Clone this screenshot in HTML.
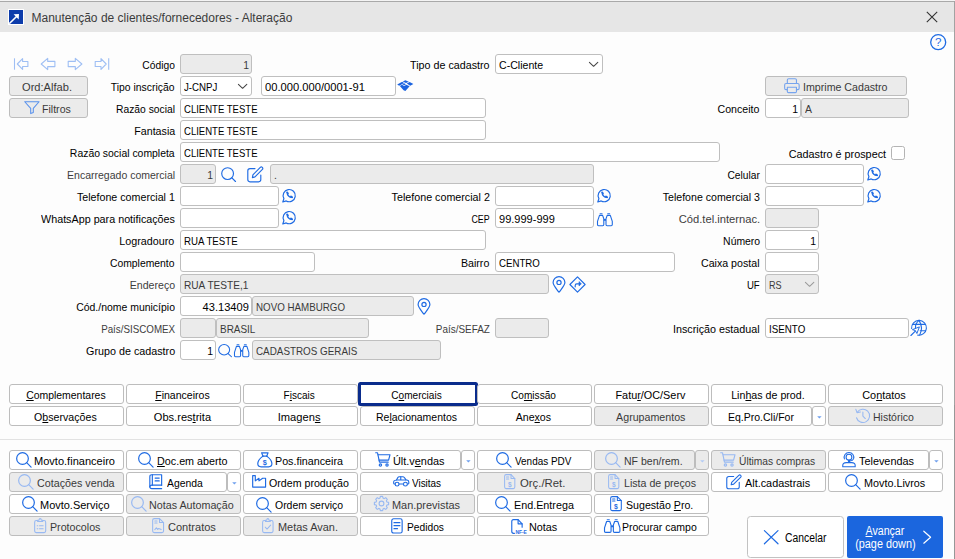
<!DOCTYPE html>
<html lang="pt-BR"><head><meta charset="utf-8"><title>Manutenção de clientes/fornecedores - Alteração</title>
<style>
html,body{margin:0;padding:0;background:#fdfdfd}
body{width:955px;height:559px;position:relative;overflow:hidden;font-family:"Liberation Sans",sans-serif;font-size:11px;color:#000}
#tb{position:absolute;left:0;top:0;width:955px;height:32px;background:#e6e6e6;border-top:1px solid #f4f4f4;box-sizing:border-box}
#tb:before{content:"";position:absolute;left:0;top:0;width:955px;height:1px;background:#a9a9a9}
#tt{position:absolute;left:31.5px;top:10px;font-size:12px;letter-spacing:0;color:#3c3c3c;white-space:nowrap;line-height:16px}
.ic{position:absolute;overflow:visible}
.lb{position:absolute;height:20px;line-height:23px;white-space:nowrap;text-align:right}
.lb.dis{color:#3e3e3e}
.fd{position:absolute;height:20px;box-sizing:border-box;border:1px solid #bfbfbf;border-radius:3px;background:#fff;line-height:21px;padding:0 2px 0 3px;white-space:nowrap;overflow:hidden}
.fd.dis{background:#ebebeb;color:#3a3a3a}
.fd.r{text-align:right;padding-right:2px}
.cb{position:absolute;width:14px;height:14px;box-sizing:border-box;border:1px solid #b4b4b4;border-radius:2.5px;background:#fff}
.bt{position:absolute;height:20px;box-sizing:border-box;border:1px solid #bdbdbd;border-radius:3px;background:#fff;line-height:21px;text-align:center;white-space:nowrap}
.bt.dis{background:#ebebeb;color:#3a3a3a}
.bt .abs{position:absolute;top:0}
.bt .ctr{position:relative;left:-1px}
.t{display:inline-block;white-space:nowrap}
.bt.foc{left:358px !important;top:382px !important;width:120px !important;height:24px;border:3px solid #0a2c8c;border-radius:2.5px;line-height:21px}
.bt.foc .ctr{left:-1.5px}
u{text-decoration:underline;text-underline-offset:1px}
#sep{position:absolute;left:0;top:439px;width:953px;height:1px;background:#e2e2e2}
#cancel{position:absolute;left:747px;top:516px;width:97px;height:42px;box-sizing:border-box;border:1px solid #c2c2c2;border-radius:3.5px;background:#fff;font-size:12px}
#cancel>span{position:absolute;left:36.5px;top:13px;line-height:16px}
#next{position:absolute;left:847px;top:516px;width:96px;height:42px;background:#1b66de;border-radius:2px;color:#fff;font-size:12px}
#nt{position:absolute;left:0;top:8.5px;width:76px;text-align:center;line-height:13px}
#re1{position:absolute;left:954px;top:1px;width:1px;height:404px;background:#a2a2a2}
#re2{position:absolute;left:954px;top:405px;width:1px;height:154px;background:#979797}
</style></head>
<body>
<div id="tb"></div>
<svg class="ic" style="left:8px;top:9px" width="16" height="16" viewBox="0 0 16 16"><rect x="0.5" y="0.5" width="15" height="15" fill="#0d3cab" stroke="#fff"/><path d="M1.2 14.8 L8.8 7.2" fill="none" stroke="#fff" stroke-width="1.6"/><path d="M5.6 5.3 L11 5 L10.7 10.4 Z" fill="#fff"/></svg>
<div id="tt">Manutenção de clientes/fornecedores - Alteração</div>
<svg class="ic" style="left:926px;top:11px" width="12" height="12" viewBox="0 0 12 12"><path d="M0.8 0.8 L11.2 11.2 M11.2 0.8 L0.8 11.2" stroke="#333" stroke-width="1.1" fill="none"/></svg>
<svg class="ic" style="left:929px;top:33px" width="18" height="18" viewBox="0 0 18 18"><circle cx="9.2" cy="9.2" r="7.5" fill="none" stroke="#1f6be3" stroke-width="1.3"/><text x="9.2" y="13.2" font-family="Liberation Sans, sans-serif" font-size="11.5" fill="#1f6be3" text-anchor="middle">?</text></svg>
<svg class="ic" style="left:13px;top:57px" width="98" height="14" viewBox="13 57 98 14"><g fill="none" stroke="#9fbff4" stroke-width="1.1" stroke-linejoin="round"><path d="M14.5 58.3 L14.5 69.7"/><path d="M17.3 64 L22.6 58.6 L22.6 61.5 L27.9 61.5 L27.9 66.5 L22.6 66.5 L22.6 69.4 Z"/><path d="M41.2 64 L47.7 58.4 L47.7 61.4 L54.9 61.4 L54.9 66.6 L47.7 66.6 L47.7 69.6 Z"/><path d="M81.9 64 L75.3 58.4 L75.3 61.4 L68.2 61.4 L68.2 66.6 L75.3 66.6 L75.3 69.6 Z"/><path d="M106.2 64 L101 58.6 L101 61.5 L95.2 61.5 L95.2 66.5 L101 66.5 L101 69.4 Z"/><path d="M108.7 58.3 L108.7 69.7"/></g></svg>
<div class="bt dis" style="left:9px;top:76px;width:79px"><span class="abs" style="left:12.3px"><span class="t" style="transform:scaleX(1.009);transform-origin:left center">Ord:Alfab.</span></span></div>
<div class="bt dis" style="left:9px;top:98px;width:79px"><span class="abs" style="left:32.2px"><span class="t" style="transform:scaleX(0.962);transform-origin:left center">Filtros</span></span></div>
<svg class="ic" style="left:24.1px;top:101.3px" width="15.81" height="13.16" viewBox="0 0 17 14" preserveAspectRatio="none"><path d="M0.8 0.8 L16.2 0.8 L10 7.8 L10 12.2 L7.2 13.4 L7.2 7.8 Z" fill="none" stroke="#5a92ec" stroke-width="1.15" stroke-linejoin="round"/></svg>
<div class="lb" style="right:780.3px;top:54px"><span class="t" style="transform:scaleX(0.935);transform-origin:right center">Código</span></div>
<div class="fd dis r" style="left:180px;top:54px;width:72px"><span class="t" style="transform:scaleX(0.950);transform-origin:right center">1</span></div>
<div class="lb" style="right:465.3px;top:54px"><span class="t" style="transform:scaleX(0.975);transform-origin:right center">Tipo de cadastro</span></div>
<div class="fd" style="left:495px;top:54px;width:108px"><span class="t" style="transform:scaleX(0.962);transform-origin:left center">C-Cliente</span></div>
<svg class="ic" style="left:588px;top:61px" width="11.00" height="7.00" viewBox="0 0 11 7" preserveAspectRatio="none"><path d="M1.4 1.3 L5.6 5.3 L9.8 1.3" fill="none" stroke="#444" stroke-width="1.05" stroke-linecap="round" stroke-linejoin="round"/></svg>
<div class="lb" style="right:780.3px;top:76px"><span class="t" style="transform:scaleX(0.943);transform-origin:right center">Tipo inscrição</span></div>
<div class="fd" style="left:180px;top:76px;width:72px"><span class="t" style="transform:scaleX(0.881);transform-origin:left center">J-CNPJ</span></div>
<svg class="ic" style="left:237px;top:83px" width="11.00" height="7.00" viewBox="0 0 11 7" preserveAspectRatio="none"><path d="M1.4 1.3 L5.6 5.3 L9.8 1.3" fill="none" stroke="#444" stroke-width="1.05" stroke-linecap="round" stroke-linejoin="round"/></svg>
<div class="fd" style="left:261px;top:76px;width:135px"><span class="t" style="transform:scaleX(1.015);transform-origin:left center">00.000.000/0001-91</span></div>
<svg class="ic" style="left:397px;top:80px" width="18.00" height="12.00" viewBox="0 0 18 12" preserveAspectRatio="none"><g fill="#1a63e0"><path d="M0.2 4.4 L5.2 1.8 L7 2.9 L2.2 5.7 Z"/><path d="M5.8 1.4 L8.4 0.2 L11.8 1.7 L9 3 Z"/><path d="M7 3.3 L9 4.3 L7.2 5.3 L5.2 4.3 Z"/><path d="M9.8 3.4 L12.6 2.1 L16.4 3.9 L13.2 5.8 Z"/><path d="M2.8 6 L5 4.8 L7.1 5.9 L9.4 4.8 L12.6 6.2 L8.4 11 L6.6 10.2 Z"/></g></svg>
<div class="bt dis" style="left:765px;top:76px;width:142px"><span class="abs" style="left:37px"><span class="t" style="transform:scaleX(0.967);transform-origin:left center">Imprime Cadastro</span></span></div>
<svg class="ic" style="left:784px;top:78px" width="15.81" height="15.64" viewBox="0 0 17 17" preserveAspectRatio="none"><g fill="none" stroke="#76a4ee" stroke-width="1.2" stroke-linejoin="round"><path d="M3.6 6 L3.6 2.2 Q3.6 0.8 5 0.8 L12 0.8 Q13.4 0.8 13.4 2.2 L13.4 6"/><path d="M3.6 12.6 L2.2 12.6 Q0.7 12.6 0.7 11.1 L0.7 7.5 Q0.7 6 2.2 6 L14.8 6 Q16.3 6 16.3 7.5 L16.3 11.1 Q16.3 12.6 14.8 12.6 L13.4 12.6"/><path d="M3.6 10 L13.4 10 L13.4 14.7 Q13.4 15.9 12.2 15.9 L4.8 15.9 Q3.6 15.9 3.6 14.7 Z"/></g></svg>
<div class="lb" style="right:780.3px;top:98px"><span class="t" style="transform:scaleX(0.937);transform-origin:right center">Razão social</span></div>
<div class="fd" style="left:180px;top:98px;width:306px"><span class="t" style="transform:scaleX(0.867);transform-origin:left center">CLIENTE TESTE</span></div>
<div class="lb" style="right:195.3px;top:98px"><span class="t" style="transform:scaleX(0.965);transform-origin:right center">Conceito</span></div>
<div class="fd r" style="left:765px;top:98px;width:36px"><span class="t" style="transform:scaleX(0.950);transform-origin:right center">1</span></div>
<div class="fd dis" style="left:801px;top:98px;width:108px"><span class="t" style="transform:scaleX(0.950);transform-origin:left center">A</span></div>
<div class="lb" style="right:780.3px;top:120px"><span class="t" style="transform:scaleX(0.971);transform-origin:right center">Fantasia</span></div>
<div class="fd" style="left:180px;top:120px;width:306px"><span class="t" style="transform:scaleX(0.867);transform-origin:left center">CLIENTE TESTE</span></div>
<div class="lb" style="right:780.3px;top:142px"><span class="t" style="transform:scaleX(0.947);transform-origin:right center">Razão social completa</span></div>
<div class="fd" style="left:180px;top:142px;width:540px"><span class="t" style="transform:scaleX(0.867);transform-origin:left center">CLIENTE TESTE</span></div>
<div class="lb" style="right:69.3px;top:143px"><span class="t" style="transform:scaleX(0.983);transform-origin:right center">Cadastro é prospect</span></div>
<div class="cb" style="left:891px;top:146px"></div>
<div class="lb dis" style="right:780.3px;top:164px"><span class="t" style="transform:scaleX(0.955);transform-origin:right center">Encarregado comercial</span></div>
<div class="fd dis r" style="left:180px;top:164px;width:36px"><span class="t" style="transform:scaleX(0.950);transform-origin:right center">1</span></div>
<svg class="ic" style="left:221px;top:167.4px" width="16.00" height="16.00" viewBox="0 0 16 16" preserveAspectRatio="none"><g fill="none" stroke="#1f6be3" stroke-width="1.15" stroke-linecap="round"><circle cx="6.6" cy="6.6" r="5.9"/><path d="M10.9 10.9 L14.5 14.5"/></g></svg>
<svg class="ic" style="left:247px;top:166px" width="17.00" height="17.00" viewBox="0 0 17 17" preserveAspectRatio="none"><g fill="none" stroke="#1f6be3" stroke-width="1.15" stroke-linejoin="round" stroke-linecap="round"><path d="M8 2.6 L3 2.6 Q0.8 2.6 0.8 4.8 L0.8 13.6 Q0.8 15.8 3 15.8 L11.6 15.8 Q13.8 15.8 13.8 13.6 L13.8 9"/><path d="M5.4 11.6 L5.9 8.9 L13.3 1.4 Q14.3 0.5 15.3 1.4 Q16.3 2.4 15.4 3.4 L8 10.9 Z"/></g></svg>
<div class="fd dis" style="left:270px;top:164px;width:324px"><span class="t" style="transform:scaleX(0.950);transform-origin:left center">.</span></div>
<div class="lb" style="right:195.3px;top:164px"><span class="t" style="transform:scaleX(0.929);transform-origin:right center">Celular</span></div>
<div class="fd" style="left:765px;top:164px;width:99px"></div>
<svg class="ic" style="left:867px;top:166.2px" width="15.00" height="15.00" viewBox="0 0 15 15" preserveAspectRatio="none"><g fill="none" stroke="#1f6be3" stroke-width="1.2" stroke-linejoin="round" stroke-linecap="round"><path d="M1.9 10.6 A6.1 6.1 0 1 1 4.2 12.9 L0.8 14 Z"/><path d="M5.3 4.5 C4.9 6.9 7.5 9.7 10.1 9.4" stroke-width="1.25"/><path d="M5.2 4.4 L5.9 5.5 M9 8.6 L10.1 9.3" stroke-width="1.9"/></g></svg>
<div class="lb" style="right:780.3px;top:186px"><span class="t" style="transform:scaleX(0.971);transform-origin:right center">Telefone comercial 1</span></div>
<div class="fd" style="left:180px;top:186px;width:99px"></div>
<svg class="ic" style="left:282px;top:188.2px" width="15.00" height="15.00" viewBox="0 0 15 15" preserveAspectRatio="none"><g fill="none" stroke="#1f6be3" stroke-width="1.2" stroke-linejoin="round" stroke-linecap="round"><path d="M1.9 10.6 A6.1 6.1 0 1 1 4.2 12.9 L0.8 14 Z"/><path d="M5.3 4.5 C4.9 6.9 7.5 9.7 10.1 9.4" stroke-width="1.25"/><path d="M5.2 4.4 L5.9 5.5 M9 8.6 L10.1 9.3" stroke-width="1.9"/></g></svg>
<div class="lb" style="right:465.3px;top:186px"><span class="t" style="transform:scaleX(0.974);transform-origin:right center">Telefone comercial 2</span></div>
<div class="fd" style="left:495px;top:186px;width:99px"></div>
<svg class="ic" style="left:597px;top:188.2px" width="15.00" height="15.00" viewBox="0 0 15 15" preserveAspectRatio="none"><g fill="none" stroke="#1f6be3" stroke-width="1.2" stroke-linejoin="round" stroke-linecap="round"><path d="M1.9 10.6 A6.1 6.1 0 1 1 4.2 12.9 L0.8 14 Z"/><path d="M5.3 4.5 C4.9 6.9 7.5 9.7 10.1 9.4" stroke-width="1.25"/><path d="M5.2 4.4 L5.9 5.5 M9 8.6 L10.1 9.3" stroke-width="1.9"/></g></svg>
<div class="lb" style="right:195.3px;top:186px"><span class="t" style="transform:scaleX(0.963);transform-origin:right center">Telefone comercial 3</span></div>
<div class="fd" style="left:765px;top:186px;width:99px"></div>
<svg class="ic" style="left:867px;top:188.2px" width="15.00" height="15.00" viewBox="0 0 15 15" preserveAspectRatio="none"><g fill="none" stroke="#1f6be3" stroke-width="1.2" stroke-linejoin="round" stroke-linecap="round"><path d="M1.9 10.6 A6.1 6.1 0 1 1 4.2 12.9 L0.8 14 Z"/><path d="M5.3 4.5 C4.9 6.9 7.5 9.7 10.1 9.4" stroke-width="1.25"/><path d="M5.2 4.4 L5.9 5.5 M9 8.6 L10.1 9.3" stroke-width="1.9"/></g></svg>
<div class="lb" style="right:780.3px;top:208px"><span class="t" style="transform:scaleX(0.978);transform-origin:right center">WhatsApp para notificações</span></div>
<div class="fd" style="left:180px;top:208px;width:99px"></div>
<svg class="ic" style="left:282px;top:210.2px" width="15.00" height="15.00" viewBox="0 0 15 15" preserveAspectRatio="none"><g fill="none" stroke="#1f6be3" stroke-width="1.2" stroke-linejoin="round" stroke-linecap="round"><path d="M1.9 10.6 A6.1 6.1 0 1 1 4.2 12.9 L0.8 14 Z"/><path d="M5.3 4.5 C4.9 6.9 7.5 9.7 10.1 9.4" stroke-width="1.25"/><path d="M5.2 4.4 L5.9 5.5 M9 8.6 L10.1 9.3" stroke-width="1.9"/></g></svg>
<div class="lb" style="right:465.3px;top:208px"><span class="t" style="transform:scaleX(0.804);transform-origin:right center">CEP</span></div>
<div class="fd" style="left:495px;top:208px;width:99px"><span class="t" style="transform:scaleX(1.002);transform-origin:left center">99.999-999</span></div>
<svg class="ic" style="left:597px;top:213px" width="16.00" height="14.00" viewBox="0 0 16 14" preserveAspectRatio="none"><g fill="none" stroke="#1f6be3" stroke-width="1.1" stroke-linejoin="round" stroke-linecap="round"><path d="M2.5 2.4 L5.6 2.4 L6.8 5.8 L6.8 11.6 Q6.8 12.7 5.7 12.7 L1.6 12.7 Q0.5 12.7 0.5 11.6 L0.5 8.4 Z"/><path d="M13.3 2.4 L10.2 2.4 L9 5.8 L9 11.6 Q9 12.7 10.1 12.7 L14.2 12.7 Q15.3 12.7 15.3 11.6 L15.3 8.4 Z"/><path d="M3.1 0.7 L5.1 0.7 M10.7 0.7 L12.7 0.7"/><path d="M6.8 6.9 L9 6.9" stroke-width="1.8" stroke-linecap="butt"/></g></svg>
<div class="lb dis" style="right:195.3px;top:208px"><span class="t" style="transform:scaleX(1.016);transform-origin:right center">Cód.tel.internac.</span></div>
<div class="fd dis" style="left:765px;top:208px;width:54px"></div>
<div class="lb" style="right:780.3px;top:230px"><span class="t" style="transform:scaleX(0.977);transform-origin:right center">Logradouro</span></div>
<div class="fd" style="left:180px;top:230px;width:306px"><span class="t" style="transform:scaleX(0.880);transform-origin:left center">RUA TESTE</span></div>
<div class="lb" style="right:195.3px;top:230px"><span class="t" style="transform:scaleX(0.946);transform-origin:right center">Número</span></div>
<div class="fd r" style="left:765px;top:230px;width:54px"><span class="t" style="transform:scaleX(0.950);transform-origin:right center">1</span></div>
<div class="lb" style="right:780.3px;top:252px"><span class="t" style="transform:scaleX(0.942);transform-origin:right center">Complemento</span></div>
<div class="fd" style="left:180px;top:252px;width:135px"></div>
<div class="lb" style="right:465.3px;top:252px"><span class="t" style="transform:scaleX(0.968);transform-origin:right center">Bairro</span></div>
<div class="fd" style="left:495px;top:252px;width:180px"><span class="t" style="transform:scaleX(0.880);transform-origin:left center">CENTRO</span></div>
<div class="lb" style="right:195.3px;top:252px"><span class="t" style="transform:scaleX(0.968);transform-origin:right center">Caixa postal</span></div>
<div class="fd" style="left:765px;top:252px;width:54px"></div>
<div class="lb dis" style="right:780.3px;top:274px"><span class="t" style="transform:scaleX(0.964);transform-origin:right center">Endereço</span></div>
<div class="fd dis" style="left:180px;top:274px;width:369px"><span class="t" style="transform:scaleX(0.920);transform-origin:left center">RUA TESTE,1</span></div>
<svg class="ic" style="left:552px;top:275.5px" width="14.00" height="17.00" viewBox="0 0 14 17" preserveAspectRatio="none"><g fill="none" stroke="#1f6be3" stroke-width="1.2" stroke-linejoin="round"><path d="M7 16.2 C3.5 11.6 1.1 9.2 1.1 6.5 A5.9 5.9 0 0 1 12.9 6.5 C12.9 9.2 10.5 11.6 7 16.2 Z"/><circle cx="7" cy="6.4" r="2.1"/></g></svg>
<svg class="ic" style="left:568.5px;top:275.5px" width="17.00" height="17.00" viewBox="0 0 17 17" preserveAspectRatio="none"><g fill="none" stroke="#1f6be3" stroke-width="1.15" stroke-linejoin="round"><path d="M8.5 0.9 L16.1 8.5 L8.5 16.1 L0.9 8.5 Z"/><path d="M6.2 10.8 L6.2 9.4 Q6.2 7.8 7.8 7.8 L10.4 7.8" stroke-linecap="round"/><path d="M10 5.6 L12.4 7.8 L10 10 Z" fill="#1f6be3" stroke-width="0.6"/></g></svg>
<div class="lb" style="right:195.3px;top:274px"><span class="t" style="transform:scaleX(0.872);transform-origin:right center">UF</span></div>
<div class="fd dis" style="left:765px;top:274px;width:54px"><span class="t" style="transform:scaleX(0.825);transform-origin:left center">RS</span></div>
<svg class="ic" style="left:804px;top:281px" width="11.00" height="7.00" viewBox="0 0 11 7" preserveAspectRatio="none"><path d="M1.4 1.3 L5.6 5.3 L9.8 1.3" fill="none" stroke="#9a9a9a" stroke-width="1.05" stroke-linecap="round" stroke-linejoin="round"/></svg>
<div class="lb" style="right:780.3px;top:296px"><span class="t" style="transform:scaleX(0.950);transform-origin:right center">Cód./nome município</span></div>
<div class="fd r" style="left:180px;top:296px;width:72px"><span class="t" style="transform:scaleX(1.009);transform-origin:right center">43.13409</span></div>
<div class="fd dis" style="left:252px;top:296px;width:162px"><span class="t" style="transform:scaleX(0.888);transform-origin:left center">NOVO HAMBURGO</span></div>
<svg class="ic" style="left:417px;top:297.5px" width="14.00" height="17.00" viewBox="0 0 14 17" preserveAspectRatio="none"><g fill="none" stroke="#1f6be3" stroke-width="1.2" stroke-linejoin="round"><path d="M7 16.2 C3.5 11.6 1.1 9.2 1.1 6.5 A5.9 5.9 0 0 1 12.9 6.5 C12.9 9.2 10.5 11.6 7 16.2 Z"/><circle cx="7" cy="6.4" r="2.1"/></g></svg>
<div class="lb dis" style="right:780.3px;top:318px"><span class="t" style="transform:scaleX(0.890);transform-origin:right center">País/SISCOMEX</span></div>
<div class="fd dis" style="left:180px;top:318px;width:36px"></div>
<div class="fd dis" style="left:216px;top:318px;width:153px"><span class="t" style="transform:scaleX(0.904);transform-origin:left center">BRASIL</span></div>
<div class="lb dis" style="right:465.3px;top:318px"><span class="t" style="transform:scaleX(0.903);transform-origin:right center">País/SEFAZ</span></div>
<div class="fd dis" style="left:495px;top:318px;width:54px"></div>
<div class="lb" style="right:195.3px;top:318px"><span class="t" style="transform:scaleX(0.978);transform-origin:right center">Inscrição estadual</span></div>
<div class="fd" style="left:765px;top:318px;width:144px"><span class="t" style="transform:scaleX(0.890);transform-origin:left center">ISENTO</span></div>
<svg class="ic" style="left:910.2px;top:319.3px" width="18.00" height="18.00" viewBox="0 0 18 18" preserveAspectRatio="none"><g fill="none" stroke="#1f6be3" stroke-width="1.1" stroke-linecap="round" stroke-linejoin="round"><path d="M1.63 9.44 A7.4 7.4 0 1 1 7.72 16.09"/><path d="M9 1.4 Q5.2 4.6 5.5 8.6 M9 1.4 Q13.6 8.8 9.7 16.1"/><path d="M2.7 5.4 L15.3 5.4 M10.2 11.7 L15.6 11.7"/><path d="M2.8 10.5 L9.4 7.9 L6.9 14.5 L5.5 11.9 Z" fill="#fff" stroke-width="1"/><path d="M5.3 12.1 L0.9 16.5"/></g></svg>
<div class="lb" style="right:780.3px;top:340px"><span class="t" style="transform:scaleX(0.977);transform-origin:right center">Grupo de cadastro</span></div>
<div class="fd r" style="left:180px;top:340px;width:36px"><span class="t" style="transform:scaleX(0.950);transform-origin:right center">1</span></div>
<svg class="ic" style="left:218.1px;top:343.7px" width="14.88" height="14.08" viewBox="0 0 16 16" preserveAspectRatio="none"><g fill="none" stroke="#1f6be3" stroke-width="1.15" stroke-linecap="round"><circle cx="6.6" cy="6.6" r="5.9"/><path d="M10.9 10.9 L14.5 14.5"/></g></svg>
<svg class="ic" style="left:233.8px;top:344.2px" width="15.52" height="14.00" viewBox="0 0 16 14" preserveAspectRatio="none"><g fill="none" stroke="#1f6be3" stroke-width="1.1" stroke-linejoin="round" stroke-linecap="round"><path d="M2.5 2.4 L5.6 2.4 L6.8 5.8 L6.8 11.6 Q6.8 12.7 5.7 12.7 L1.6 12.7 Q0.5 12.7 0.5 11.6 L0.5 8.4 Z"/><path d="M13.3 2.4 L10.2 2.4 L9 5.8 L9 11.6 Q9 12.7 10.1 12.7 L14.2 12.7 Q15.3 12.7 15.3 11.6 L15.3 8.4 Z"/><path d="M3.1 0.7 L5.1 0.7 M10.7 0.7 L12.7 0.7"/><path d="M6.8 6.9 L9 6.9" stroke-width="1.8" stroke-linecap="butt"/></g></svg>
<div class="fd dis" style="left:252px;top:340px;width:189px"><span class="t" style="transform:scaleX(0.896);transform-origin:left center">CADASTROS GERAIS</span></div>
<div class="bt" style="left:9px;top:384px;width:115px"><span class="ctr"><span class="t" style="transform:scaleX(0.949);transform-origin:center center"><u>C</u>omplementares</span></span></div>
<div class="bt" style="left:126px;top:384px;width:115px"><span class="ctr"><span class="t" style="transform:scaleX(0.957);transform-origin:center center"><u>F</u>inanceiros</span></span></div>
<div class="bt" style="left:243px;top:384px;width:115px"><span class="ctr"><span class="t" style="transform:scaleX(0.908);transform-origin:center center">F<u>i</u>scais</span></span></div>
<div class="bt foc" style="left:360px;top:384px;width:115px"><span class="ctr"><span class="t" style="transform:scaleX(0.916);transform-origin:center center">C<u>o</u>merciais</span></span></div>
<div class="bt" style="left:477px;top:384px;width:115px"><span class="ctr"><span class="t" style="transform:scaleX(0.918);transform-origin:center center">Co<u>m</u>issão</span></span></div>
<div class="bt" style="left:594px;top:384px;width:115px"><span class="ctr"><span class="t" style="transform:scaleX(0.986);transform-origin:center center">Fatu<u>r</u>/OC/Serv</span></span></div>
<div class="bt" style="left:711px;top:384px;width:115px"><span class="ctr"><span class="t" style="transform:scaleX(0.969);transform-origin:center center">Lin<u>h</u>as de prod.</span></span></div>
<div class="bt" style="left:828px;top:384px;width:115px"><span class="ctr"><span class="t" style="transform:scaleX(0.990);transform-origin:center center">Co<u>n</u>tatos</span></span></div>
<div class="bt" style="left:9px;top:406px;width:115px"><span class="ctr"><span class="t" style="transform:scaleX(0.966);transform-origin:center center">O<u>b</u>servações</span></span></div>
<div class="bt" style="left:126px;top:406px;width:115px"><span class="ctr"><span class="t" style="transform:scaleX(1.006);transform-origin:center center">Obs.res<u>t</u>rita</span></span></div>
<div class="bt" style="left:243px;top:406px;width:115px"><span class="ctr"><span class="t" style="transform:scaleX(1.012);transform-origin:center center">Imagen<u>s</u></span></span></div>
<div class="bt" style="left:360px;top:406px;width:115px"><span class="ctr"><span class="t" style="transform:scaleX(0.952);transform-origin:center center">Re<u>l</u>acionamentos</span></span></div>
<div class="bt" style="left:477px;top:406px;width:115px"><span class="ctr"><span class="t" style="transform:scaleX(0.964);transform-origin:center center">Ane<u>x</u>os</span></span></div>
<div class="bt dis" style="left:594px;top:406px;width:115px"><span class="ctr"><span class="t" style="transform:scaleX(0.969);transform-origin:center center">Agrupamentos</span></span></div>
<div class="bt" style="left:711px;top:406px;width:101px"><span class="abs" style="left:16px"><span class="t" style="transform:scaleX(0.954);transform-origin:left center">Eq.Pro.Cli/For</span></span></div>
<div class="bt" style="left:812px;top:406px;width:14px"></div>
<svg class="ic" style="left:816.6px;top:415.6px" width="5.00" height="3.00" viewBox="0 0 5 3" preserveAspectRatio="none"><path d="M0.2 0.2 L4.6 0.2 L2.4 2.6 Z" fill="#6fa0ee"/></svg>
<div class="bt dis" style="left:828px;top:406px;width:115px"><span class="abs" style="left:44px"><span class="t" style="transform:scaleX(0.956);transform-origin:left center">Histórico</span></span></div>
<svg class="ic" style="left:855px;top:408px" width="15.98" height="15.98" viewBox="0 0 17 17" preserveAspectRatio="none"><g fill="none" stroke="#98b9f2" stroke-width="1.15" stroke-linejoin="round" stroke-linecap="round"><path d="M2.4 4.6 A7.1 7.1 0 1 1 1.6 10.4"/><path d="M0.9 1.4 L2.2 4.9 L5.8 4.2"/><path d="M8.4 4.4 L8.4 8.6 L11 11.2"/></g></svg>
<div id="sep"></div>
<div class="bt" style="left:9px;top:450px;width:115px"><span class="abs" style="left:24px"><span class="t" style="transform:scaleX(1.003);transform-origin:left center">Movto.financeiro</span></span></div>
<svg class="ic" style="left:16px;top:452px" width="17.00" height="17.00" viewBox="0 0 17 17" preserveAspectRatio="none"><g fill="none" stroke="#1f6be3" stroke-width="1.2" stroke-linecap="round"><circle cx="6.5" cy="6.5" r="5.85"/><path d="M10.7 10.7 L15.1 15.1"/></g></svg>
<div class="bt" style="left:126px;top:450px;width:115px"><span class="abs" style="left:30px"><span class="t" style="transform:scaleX(0.978);transform-origin:left center"><u>D</u>oc.em aberto</span></span></div>
<svg class="ic" style="left:138px;top:452px" width="17.00" height="17.00" viewBox="0 0 17 17" preserveAspectRatio="none"><g fill="none" stroke="#1f6be3" stroke-width="1.2" stroke-linecap="round"><circle cx="6.5" cy="6.5" r="5.85"/><path d="M10.7 10.7 L15.1 15.1"/></g></svg>
<div class="bt" style="left:243px;top:450px;width:115px"><span class="abs" style="left:31px"><span class="t" style="transform:scaleX(0.975);transform-origin:left center">Pos.financeira</span></span></div>
<svg class="ic" style="left:256.6px;top:452px" width="16.66" height="15.98" viewBox="0 0 17 17" preserveAspectRatio="none"><g fill="none" stroke="#1f6be3" stroke-width="1.2" stroke-linejoin="round" stroke-linecap="round"><path d="M6.1 4.4 L4.7 0.9 L11.3 0.9 L9.9 4.4"/><path d="M5.6 4.4 L10.4 4.4"/><path d="M6.1 4.4 C3.4 6.4 0.8 9.6 0.8 12.6 Q0.8 15.8 4.2 15.8 L11.8 15.8 Q15.2 15.8 15.2 12.6 C15.2 9.6 12.6 6.4 9.9 4.4"/></g><text x="8" y="13.6" font-family="Liberation Sans, sans-serif" font-size="7.5" font-weight="bold" fill="#1f6be3" text-anchor="middle">$</text></svg>
<div class="bt" style="left:360px;top:450px;width:101px"><span class="abs" style="left:32px"><span class="t" style="transform:scaleX(0.991);transform-origin:left center">Últ.v<u>e</u>ndas</span></span></div>
<div class="bt" style="left:461px;top:450px;width:14px"></div>
<svg class="ic" style="left:465.6px;top:459.6px" width="5.00" height="3.00" viewBox="0 0 5 3" preserveAspectRatio="none"><path d="M0.2 0.2 L4.6 0.2 L2.4 2.6 Z" fill="#6fa0ee"/></svg>
<svg class="ic" style="left:375px;top:452.2px" width="16.49" height="15.04" viewBox="0 0 17 16" preserveAspectRatio="none"><g fill="none" stroke="#1f6be3" stroke-width="1.2" stroke-linejoin="round" stroke-linecap="round"><path d="M0.7 0.8 L2.6 0.8 L4.6 10.8 L13.6 10.8"/><path d="M3.1 2.9 L15.5 2.9 L14 8.6 L4.2 8.6"/><circle cx="5.6" cy="13.9" r="1.2"/><circle cx="12.4" cy="13.9" r="1.2"/></g></svg>
<div class="bt" style="left:477px;top:450px;width:115px"><span class="abs" style="left:37px"><span class="t" style="transform:scaleX(0.903);transform-origin:left center">Vendas PDV</span></span></div>
<svg class="ic" style="left:496px;top:452px" width="17.00" height="17.00" viewBox="0 0 17 17" preserveAspectRatio="none"><g fill="none" stroke="#1f6be3" stroke-width="1.2" stroke-linecap="round"><circle cx="6.5" cy="6.5" r="5.85"/><path d="M10.7 10.7 L15.1 15.1"/></g></svg>
<div class="bt dis" style="left:594px;top:450px;width:101px"><span class="abs" style="left:29px"><span class="t" style="transform:scaleX(0.958);transform-origin:left center">NF ben/rem.</span></span></div>
<div class="bt dis" style="left:695px;top:450px;width:14px"></div>
<svg class="ic" style="left:699.6px;top:459.6px" width="5.00" height="3.00" viewBox="0 0 5 3" preserveAspectRatio="none"><path d="M0.2 0.2 L4.6 0.2 L2.4 2.6 Z" fill="#b3cbf5"/></svg>
<svg class="ic" style="left:605px;top:452px" width="17.00" height="17.00" viewBox="0 0 17 17" preserveAspectRatio="none"><g fill="none" stroke="#98b9f2" stroke-width="1.2" stroke-linecap="round"><circle cx="6.5" cy="6.5" r="5.85"/><path d="M10.7 10.7 L15.1 15.1"/></g></svg>
<div class="bt dis" style="left:711px;top:450px;width:115px"><span class="abs" style="left:27px"><span class="t" style="transform:scaleX(0.930);transform-origin:left center">Últimas compras</span></span></div>
<svg class="ic" style="left:720px;top:452.2px" width="16.49" height="15.04" viewBox="0 0 17 16" preserveAspectRatio="none"><g fill="none" stroke="#98b9f2" stroke-width="1.2" stroke-linejoin="round" stroke-linecap="round"><path d="M0.7 0.8 L2.6 0.8 L4.6 10.8 L13.6 10.8"/><path d="M3.1 2.9 L15.5 2.9 L14 8.6 L4.2 8.6"/><circle cx="5.6" cy="13.9" r="1.2"/><circle cx="12.4" cy="13.9" r="1.2"/></g></svg>
<div class="bt" style="left:828px;top:450px;width:101px"><span class="abs" style="left:30px"><span class="t" style="transform:scaleX(0.988);transform-origin:left center">Televendas</span></span></div>
<div class="bt" style="left:929px;top:450px;width:14px"></div>
<svg class="ic" style="left:933.6px;top:459.6px" width="5.00" height="3.00" viewBox="0 0 5 3" preserveAspectRatio="none"><path d="M0.2 0.2 L4.6 0.2 L2.4 2.6 Z" fill="#6fa0ee"/></svg>
<svg class="ic" style="left:842px;top:452.3px" width="13.95" height="15.81" viewBox="0 0 15 17" preserveAspectRatio="none"><g fill="none" stroke="#1f6be3" stroke-width="1.15" stroke-linejoin="round" stroke-linecap="round"><circle cx="7.5" cy="5.6" r="3.1"/><path d="M2.6 7.4 A5.2 5.2 0 1 1 12.4 7.4 Q11.6 9.4 8.6 9.6"/><path d="M0.8 15.8 L0.8 14.6 Q0.8 11.4 4.6 11.4 L10.4 11.4 Q14.2 11.4 14.2 14.6 L14.2 15.8 Z"/><circle cx="7.6" cy="9.6" r="0.7" fill="#1f6be3"/></g></svg>
<div class="bt dis" style="left:9px;top:472px;width:115px"><span class="abs" style="left:27px"><span class="t" style="transform:scaleX(0.976);transform-origin:left center">Cotações venda</span></span></div>
<svg class="ic" style="left:18px;top:474px" width="17.00" height="17.00" viewBox="0 0 17 17" preserveAspectRatio="none"><g fill="none" stroke="#98b9f2" stroke-width="1.2" stroke-linecap="round"><circle cx="6.5" cy="6.5" r="5.85"/><path d="M10.7 10.7 L15.1 15.1"/></g></svg>
<div class="bt" style="left:126px;top:472px;width:101px"><span class="abs" style="left:40px"><span class="t" style="transform:scaleX(0.944);transform-origin:left center">A<u>g</u>enda</span></span></div>
<div class="bt" style="left:227px;top:472px;width:14px"></div>
<svg class="ic" style="left:231.6px;top:481.6px" width="5.00" height="3.00" viewBox="0 0 5 3" preserveAspectRatio="none"><path d="M0.2 0.2 L4.6 0.2 L2.4 2.6 Z" fill="#6fa0ee"/></svg>
<svg class="ic" style="left:149px;top:474.1px" width="13.95" height="15.81" viewBox="0 0 15 17" preserveAspectRatio="none"><g fill="none" stroke="#1f6be3" stroke-width="1.25" stroke-linejoin="round" stroke-linecap="round"><path d="M13.6 12 L13.6 0.8 L3 0.8 Q0.9 0.8 0.9 2.9 L0.9 13.8 Q0.9 15.8 3 15.8 L13.6 15.8"/><path d="M13.6 12 L3 12 Q0.9 12 0.9 13.8"/><path d="M3.6 0.8 L3.6 12"/><path d="M6.6 4.4 L11 4.4 M6.6 7.4 L11 7.4"/></g></svg>
<div class="bt" style="left:243px;top:472px;width:115px"><span class="abs" style="left:25px"><span class="t" style="transform:scaleX(0.967);transform-origin:left center">Ordem produção</span></span></div>
<svg class="ic" style="left:251.6px;top:474.8px" width="14.55" height="13.02" viewBox="0 0 15 14" preserveAspectRatio="none"><path d="M0.7 0.7 L3.4 0.7 L3.4 6.3 L7.2 3.5 L7.2 6.3 L11 3.5 L14 3.5 L14 13 L0.7 13 Z" fill="none" stroke="#1f6be3" stroke-width="1.2" stroke-linejoin="round"/></svg>
<div class="bt" style="left:360px;top:472px;width:115px"><span class="abs" style="left:51px"><span class="t" style="transform:scaleX(0.901);transform-origin:left center">Visitas</span></span></div>
<svg class="ic" style="left:392.7px;top:476.2px" width="16.49" height="11.16" viewBox="0 0 17 12" preserveAspectRatio="none"><g fill="none" stroke="#1f6be3" stroke-width="1.15" stroke-linejoin="round" stroke-linecap="round"><path d="M2.2 8.6 L1.6 8.6 Q0.7 8.6 0.7 7.7 L0.7 6.2 Q0.7 4.8 2.6 4.5 L3.6 4.3 L5 1.6 Q5.4 0.8 6.4 0.8 L10.2 0.8 Q11.1 0.8 11.7 1.6 L13.4 4.2 L14.4 4.4 Q16.3 4.8 16.3 6.4 L16.3 7.7 Q16.3 8.6 15.4 8.6 L14.9 8.6"/><path d="M6.3 8.6 L10.6 8.6 M3.8 4.3 L13.2 4.3 M8 0.9 L8 4.3"/><circle cx="4.2" cy="8.8" r="2"/><circle cx="12.8" cy="8.8" r="2"/></g></svg>
<div class="bt dis" style="left:477px;top:472px;width:115px"><span class="abs" style="left:42px"><span class="t" style="transform:scaleX(1.031);transform-origin:left center">Orç./Ret.</span></span></div>
<svg class="ic" style="left:503.8px;top:474px" width="11.44" height="15.64" viewBox="0 0 13 17" preserveAspectRatio="none"><g fill="none" stroke="#98b9f2" stroke-width="1.15" stroke-linejoin="round" stroke-linecap="round"><path d="M8 0.7 L2.4 0.7 Q0.7 0.7 0.7 2.4 L0.7 14.2 Q0.7 15.9 2.4 15.9 L10.6 15.9 Q12.3 15.9 12.3 14.2 L12.3 5 Z"/><path d="M8 0.7 L8 5 L12.3 5"/><path d="M2.8 3.2 L5.4 3.2 M2.8 5.4 L5.4 5.4"/></g><text x="6.5" y="13.8" font-family="Liberation Sans, sans-serif" font-size="7.5" font-weight="bold" fill="#98b9f2" text-anchor="middle">$</text></svg>
<div class="bt dis" style="left:594px;top:472px;width:115px"><span class="abs" style="left:29px"><span class="t" style="transform:scaleX(0.966);transform-origin:left center">Lista de preços</span></span></div>
<svg class="ic" style="left:608.2px;top:474px" width="11.44" height="15.64" viewBox="0 0 13 17" preserveAspectRatio="none"><g fill="none" stroke="#98b9f2" stroke-width="1.15" stroke-linejoin="round" stroke-linecap="round"><path d="M8 0.7 L2.4 0.7 Q0.7 0.7 0.7 2.4 L0.7 14.2 Q0.7 15.9 2.4 15.9 L10.6 15.9 Q12.3 15.9 12.3 14.2 L12.3 5 Z"/><path d="M8 0.7 L8 5 L12.3 5"/><path d="M2.8 3.2 L5.4 3.2 M2.8 5.4 L5.4 5.4"/></g><text x="6.5" y="13.8" font-family="Liberation Sans, sans-serif" font-size="7.5" font-weight="bold" fill="#98b9f2" text-anchor="middle">$</text></svg>
<div class="bt" style="left:711px;top:472px;width:115px"><span class="abs" style="left:33px"><span class="t" style="transform:scaleX(0.986);transform-origin:left center">Alt.cadastrais</span></span></div>
<svg class="ic" style="left:725.7px;top:474.2px" width="16.32" height="15.81" viewBox="0 0 17 17" preserveAspectRatio="none"><g fill="none" stroke="#1f6be3" stroke-width="1.15" stroke-linejoin="round" stroke-linecap="round"><path d="M8 2.6 L3 2.6 Q0.8 2.6 0.8 4.8 L0.8 13.6 Q0.8 15.8 3 15.8 L11.6 15.8 Q13.8 15.8 13.8 13.6 L13.8 9"/><path d="M5.4 11.6 L5.9 8.9 L13.3 1.4 Q14.3 0.5 15.3 1.4 Q16.3 2.4 15.4 3.4 L8 10.9 Z"/></g></svg>
<div class="bt" style="left:828px;top:472px;width:115px"><span class="abs" style="left:35px"><span class="t" style="transform:scaleX(0.981);transform-origin:left center">Movto.Livros</span></span></div>
<svg class="ic" style="left:845px;top:474px" width="17.00" height="17.00" viewBox="0 0 17 17" preserveAspectRatio="none"><g fill="none" stroke="#1f6be3" stroke-width="1.2" stroke-linecap="round"><circle cx="6.5" cy="6.5" r="5.85"/><path d="M10.7 10.7 L15.1 15.1"/></g></svg>
<div class="bt" style="left:9px;top:494px;width:115px"><span class="abs" style="left:30px"><span class="t" style="transform:scaleX(0.997);transform-origin:left center">Movto.Serviço</span></span></div>
<svg class="ic" style="left:22px;top:496px" width="17.00" height="17.00" viewBox="0 0 17 17" preserveAspectRatio="none"><g fill="none" stroke="#1f6be3" stroke-width="1.2" stroke-linecap="round"><circle cx="6.5" cy="6.5" r="5.85"/><path d="M10.7 10.7 L15.1 15.1"/></g></svg>
<div class="bt dis" style="left:126px;top:494px;width:115px"><span class="abs" style="left:22px"><span class="t" style="transform:scaleX(0.975);transform-origin:left center">Notas Automação</span></span></div>
<svg class="ic" style="left:131px;top:496px" width="17.00" height="17.00" viewBox="0 0 17 17" preserveAspectRatio="none"><g fill="none" stroke="#98b9f2" stroke-width="1.2" stroke-linecap="round"><circle cx="6.5" cy="6.5" r="5.85"/><path d="M10.7 10.7 L15.1 15.1"/></g></svg>
<div class="bt" style="left:243px;top:494px;width:115px"><span class="abs" style="left:31px"><span class="t" style="transform:scaleX(0.951);transform-origin:left center">Ordem serviço</span></span></div>
<svg class="ic" style="left:256px;top:496.5px" width="17.00" height="17.00" viewBox="0 0 17 17" preserveAspectRatio="none"><g fill="none" stroke="#1f6be3" stroke-width="1.2" stroke-linecap="round"><circle cx="6.5" cy="6.5" r="5.85"/><path d="M10.7 10.7 L15.1 15.1"/></g></svg>
<div class="bt dis" style="left:360px;top:494px;width:115px"><span class="abs" style="left:31px"><span class="t" style="transform:scaleX(0.993);transform-origin:left center">Man.previstas</span></span></div>
<svg class="ic" style="left:374px;top:496px" width="15.00" height="15.00" viewBox="0 0 15 15" preserveAspectRatio="none"><g fill="none" stroke="#98b9f2" stroke-width="1.1" stroke-linejoin="round"><path d="M6.35 0.39 L8.65 0.39 L8.99 2.10 L10.26 2.63 L11.72 1.66 L13.34 3.28 L12.37 4.74 L12.90 6.01 L14.61 6.35 L14.61 8.65 L12.90 8.99 L12.37 10.26 L13.34 11.72 L11.72 13.34 L10.26 12.37 L8.99 12.90 L8.65 14.61 L6.35 14.61 L6.01 12.90 L4.74 12.37 L3.28 13.34 L1.66 11.72 L2.63 10.26 L2.10 8.99 L0.39 8.65 L0.39 6.35 L2.10 6.01 L2.63 4.74 L1.66 3.28 L3.28 1.66 L4.74 2.63 L6.01 2.10 Z"/><circle cx="7.5" cy="7.5" r="2.4"/></g></svg>
<div class="bt" style="left:477px;top:494px;width:115px"><span class="abs" style="left:36px"><span class="t" style="transform:scaleX(0.979);transform-origin:left center">End.Entrega</span></span></div>
<svg class="ic" style="left:495px;top:496px" width="17.00" height="17.00" viewBox="0 0 17 17" preserveAspectRatio="none"><g fill="none" stroke="#1f6be3" stroke-width="1.2" stroke-linecap="round"><circle cx="6.5" cy="6.5" r="5.85"/><path d="M10.7 10.7 L15.1 15.1"/></g></svg>
<div class="bt" style="left:594px;top:494px;width:115px"><span class="abs" style="left:31px"><span class="t" style="transform:scaleX(0.965);transform-origin:left center">Sugestão <u>P</u>ro.</span></span></div>
<svg class="ic" style="left:610px;top:496px" width="11.96" height="15.64" viewBox="0 0 13 17" preserveAspectRatio="none"><g fill="none" stroke="#1f6be3" stroke-width="1.15" stroke-linejoin="round" stroke-linecap="round"><path d="M8 0.7 L2.4 0.7 Q0.7 0.7 0.7 2.4 L0.7 14.2 Q0.7 15.9 2.4 15.9 L10.6 15.9 Q12.3 15.9 12.3 14.2 L12.3 5 Z"/><path d="M8 0.7 L8 5 L12.3 5"/><path d="M2.8 3.2 L5.4 3.2 M2.8 5.4 L5.4 5.4"/></g><text x="6.5" y="13.8" font-family="Liberation Sans, sans-serif" font-size="7.5" font-weight="bold" fill="#1f6be3" text-anchor="middle">$</text></svg>
<div class="bt dis" style="left:9px;top:516px;width:115px"><span class="abs" style="left:40px"><span class="t" style="transform:scaleX(0.971);transform-origin:left center">Protocolos</span></span></div>
<svg class="ic" style="left:33.8px;top:517.8px" width="12.35" height="15.64" viewBox="0 0 13 17" preserveAspectRatio="none"><g fill="none" stroke="#98b9f2" stroke-width="1.15" stroke-linejoin="round" stroke-linecap="round"><path d="M3.6 2.8 L2.4 2.8 Q0.7 2.8 0.7 4.5 L0.7 14.2 Q0.7 15.9 2.4 15.9 L10.6 15.9 Q12.3 15.9 12.3 14.2 L12.3 4.5 Q12.3 2.8 10.6 2.8 L9.4 2.8"/><path d="M3.8 3.9 L3.8 2.4 L5.2 2.4 Q5.4 0.7 6.5 0.7 Q7.6 0.7 7.8 2.4 L9.2 2.4 L9.2 3.9 Z"/><path d="M3.4 8.4 L4 8.4 M5.8 8.4 L9.6 8.4 M3.4 11.8 L4 11.8 M5.8 11.8 L9.6 11.8"/></g></svg>
<div class="bt dis" style="left:126px;top:516px;width:115px"><span class="abs" style="left:41px"><span class="t" style="transform:scaleX(1.004);transform-origin:left center">Contratos</span></span></div>
<svg class="ic" style="left:151.9px;top:518.2px" width="12.22" height="15.64" viewBox="0 0 13 17" preserveAspectRatio="none"><g fill="none" stroke="#98b9f2" stroke-width="1.15" stroke-linejoin="round" stroke-linecap="round"><path d="M8 0.7 L2.4 0.7 Q0.7 0.7 0.7 2.4 L0.7 14.2 Q0.7 15.9 2.4 15.9 L10.6 15.9 Q12.3 15.9 12.3 14.2 L12.3 5 Z"/><path d="M8 0.7 L8 5 L12.3 5"/><path d="M3 3.2 L5.4 3.2 M3 5.4 L5.4 5.4"/><path d="M3 12.6 L4.6 10.6 L6 12.4 L7.2 11.4 L9.8 12.4"/></g></svg>
<div class="bt dis" style="left:243px;top:516px;width:115px"><span class="abs" style="left:34px"><span class="t" style="transform:scaleX(0.993);transform-origin:left center">Metas Avan.</span></span></div>
<svg class="ic" style="left:262.2px;top:517.8px" width="11.70" height="15.64" viewBox="0 0 13 17" preserveAspectRatio="none"><g fill="none" stroke="#98b9f2" stroke-width="1.15" stroke-linejoin="round" stroke-linecap="round"><path d="M3.6 2.8 L2.4 2.8 Q0.7 2.8 0.7 4.5 L0.7 14.2 Q0.7 15.9 2.4 15.9 L10.6 15.9 Q12.3 15.9 12.3 14.2 L12.3 4.5 Q12.3 2.8 10.6 2.8 L9.4 2.8"/><path d="M3.8 3.9 L3.8 2.4 L5.2 2.4 Q5.4 0.7 6.5 0.7 Q7.6 0.7 7.8 2.4 L9.2 2.4 L9.2 3.9 Z"/><path d="M3.6 10 L5.6 12 L9.6 7.8"/></g></svg>
<div class="bt" style="left:360px;top:516px;width:115px"><span class="abs" style="left:46px"><span class="t" style="transform:scaleX(0.930);transform-origin:left center">Pedidos</span></span></div>
<svg class="ic" style="left:390.8px;top:517.8px" width="12.09" height="15.98" viewBox="0 0 13 17" preserveAspectRatio="none"><g fill="none" stroke="#1f6be3" stroke-width="1.25" stroke-linejoin="round" stroke-linecap="round"><rect x="0.8" y="0.8" width="11.2" height="15.2" rx="2"/><path d="M3.2 5 L9.6 5 M3.2 8.2 L9.6 8.2 M3.2 11.4 L7 11.4"/></g></svg>
<div class="bt" style="left:477px;top:516px;width:115px"><span class="abs" style="left:51px"><span class="t" style="transform:scaleX(0.984);transform-origin:left center">Notas</span></span></div>
<svg class="ic" style="left:510.7px;top:518.5px" width="16.32" height="15.36" viewBox="0 0 17 16" preserveAspectRatio="none"><g fill="none" stroke="#1f6be3" stroke-width="1.2" stroke-linejoin="round" stroke-linecap="round"><path d="M3.6 14.9 L2.6 14.9 Q0.8 14.9 0.8 13.1 L0.8 2.5 Q0.8 0.7 2.6 0.7 L7.4 0.7 L11.6 5 L11.6 8.6"/><path d="M7.4 0.7 L7.4 5 L11.6 5"/></g><text x="4.6" y="15.2" font-family="Liberation Sans, sans-serif" font-size="5.6" font-weight="bold" fill="#1f6be3" textLength="12" lengthAdjust="spacingAndGlyphs">NF-E</text></svg>
<div class="bt" style="left:594px;top:516px;width:115px"><span class="abs" style="left:27px"><span class="t" style="transform:scaleX(0.956);transform-origin:left center">Procurar campo</span></span></div>
<svg class="ic" style="left:603.9px;top:518.5px" width="16.64" height="14.84" viewBox="0 0 16 14" preserveAspectRatio="none"><g fill="none" stroke="#1f6be3" stroke-width="1.1" stroke-linejoin="round" stroke-linecap="round"><path d="M2.5 2.4 L5.6 2.4 L6.8 5.8 L6.8 11.6 Q6.8 12.7 5.7 12.7 L1.6 12.7 Q0.5 12.7 0.5 11.6 L0.5 8.4 Z"/><path d="M13.3 2.4 L10.2 2.4 L9 5.8 L9 11.6 Q9 12.7 10.1 12.7 L14.2 12.7 Q15.3 12.7 15.3 11.6 L15.3 8.4 Z"/><path d="M3.1 0.7 L5.1 0.7 M10.7 0.7 L12.7 0.7"/><path d="M6.8 6.9 L9 6.9" stroke-width="1.8" stroke-linecap="butt"/></g></svg>
<div id="cancel"><span><span class="t" style="transform:scaleX(0.862);transform-origin:left center">Cancelar</span></span></div>
<svg class="ic" style="left:763px;top:529px" width="17" height="16" viewBox="0 0 17 16"><path d="M1.4 1.6 L15 14.8 M15 1.6 L1.4 14.8" stroke="#1f6be3" stroke-width="1.2" fill="none" stroke-linecap="round"/></svg>
<div id="next"><div id="nt"><span class="t" style="transform:scaleX(0.885)"><u>A</u>vançar</span><br><span class="t" style="transform:scaleX(0.905)">(page down)</span></div></div>
<svg class="ic" style="left:922px;top:530px" width="10" height="14" viewBox="0 0 10 14"><path d="M1.8 1.2 L8.6 7.2 L1.8 13.2" stroke="#fff" stroke-width="1.2" fill="none" stroke-linecap="round" stroke-linejoin="round"/></svg>
<div id="re1"></div><div id="re2"></div>
</body></html>
